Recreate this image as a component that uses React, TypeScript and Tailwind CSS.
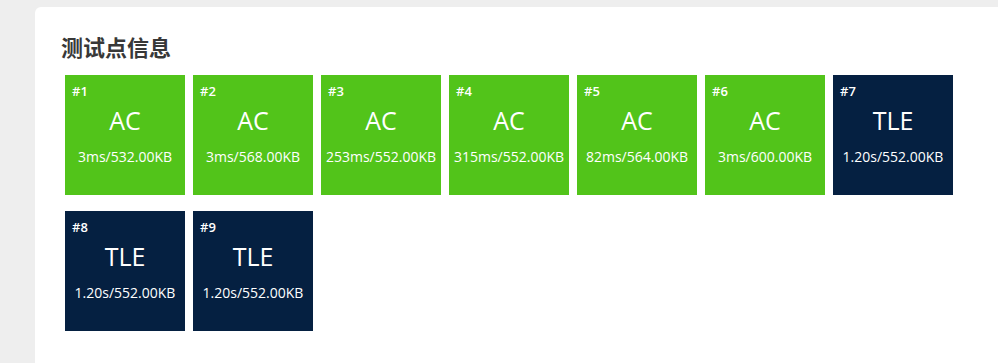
const cases = [
  { id: 1, status: 'AC', info: '3ms/532.00KB' },
  { id: 2, status: 'AC', info: '3ms/568.00KB' },
  { id: 3, status: 'AC', info: '253ms/552.00KB' },
  { id: 4, status: 'AC', info: '315ms/552.00KB' },
  { id: 5, status: 'AC', info: '82ms/564.00KB' },
  { id: 6, status: 'AC', info: '3ms/600.00KB' },
  { id: 7, status: 'TLE', info: '1.20s/552.00KB' },
  { id: 8, status: 'TLE', info: '1.20s/552.00KB' },
  { id: 9, status: 'TLE', info: '1.20s/552.00KB' },
]

function CaseTile({ id, status, info }: { id: number; status: string; info: string }) {
  const bg = status === 'AC' ? 'bg-[#52c41a]' : 'bg-[#052041]'
  return (
    <div className={`${bg} w-[120px] h-[120px] text-white flex flex-col px-[7px] pt-[8px]`}>
      <div className="text-[13px] leading-[16px] font-semibold">#{id}</div>
      <div className="text-center text-[25px] leading-[28px] mt-[7px]">{status}</div>
      <div className="text-center text-[14px] leading-[18px] mt-[14px] whitespace-nowrap -mx-[7px]">{info}</div>
    </div>
  )
}

export default function App() {
  return (
    <div className="w-[998px] h-[363px] bg-[#eeeeee] overflow-hidden pl-[35px] pt-[7px] font-['Open_Sans','Noto_Sans_CJK_SC',sans-serif]">
      <div className="bg-white rounded-tl-md h-[400px] pl-[26px] pt-[25px]">
        <h2 className="text-[22px] leading-[30px] font-bold text-[#383838]">测试点信息</h2>
        <div className="flex flex-wrap gap-x-[8px] gap-y-[16px] w-[900px] pl-[4px] mt-[13px]">
          {cases.map((c) => (
            <CaseTile key={c.id} {...c} />
          ))}
        </div>
      </div>
    </div>
  )
}
